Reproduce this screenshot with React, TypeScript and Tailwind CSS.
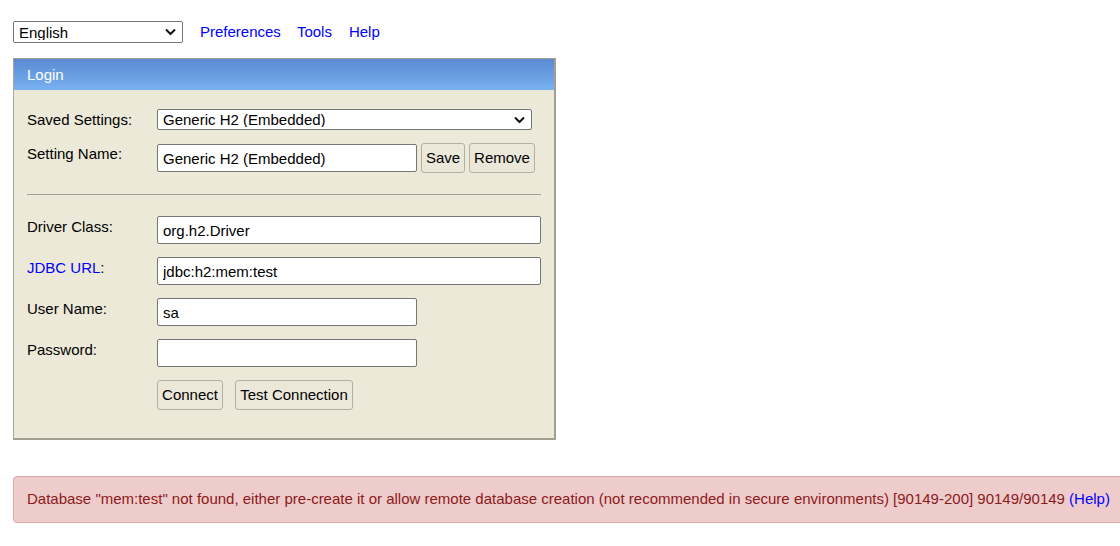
import React from "react";

const Chevron = () => (
  <svg width="11" height="7" viewBox="0 0 11 7" className="pointer-events-none absolute right-[7px] top-1/2 -translate-y-1/2">
    <path d="M1 1 L5.5 5.5 L10 1" fill="none" stroke="#111" strokeWidth="2" />
  </svg>
);

function Select({ value, className }: { value: string; className: string }) {
  return (
    <div className={`relative ${className}`}>
      <select
        defaultValue={value}
        className="appearance-none w-full h-full bg-white border border-[#767676] rounded-[2px] pl-[5px] pr-6 text-[15px] leading-none text-black outline-none"
      >
        <option>{value}</option>
      </select>
      <Chevron />
    </div>
  );
}

function Input({ value, w }: { value: string; w: string }) {
  return (
    <input
      defaultValue={value}
      className={`${w} h-[28px] bg-white border border-[#767676] rounded-[2px] px-[5px] text-[15px] text-black outline-none`}
    />
  );
}

function Btn({ children, w }: { children: React.ReactNode; w: string }) {
  return (
    <button className={`${w} h-[30px] bg-[#ebe8da] border border-[#b3b0a3] rounded-[3px] text-[15px] text-black px-0 whitespace-nowrap`}>
      {children}
    </button>
  );
}

export default function App() {
  return (
    <div
      className="w-screen min-h-screen overflow-hidden bg-white text-[15px] text-black"
      style={{ fontFamily: '"Liberation Sans", Arial, sans-serif' }}
    >
      <div className="flex items-center pl-[13px] pt-[21px] gap-[17px]">
        <Select value="English" className="w-[170px] h-[22px]" />
        <a className="text-[#0000ff] leading-[22px]">Preferences</a>
        <a className="text-[#0000ff] leading-[22px] -ml-px">Tools</a>
        <a className="text-[#0000ff] leading-[22px]">Help</a>
      </div>

      <div className="ml-[13px] mt-[15px] w-[543px] border-t border-l border-r-2 border-b-2 border-t-[#a3a193] border-l-[#a8a699] border-r-[#a19f92] border-b-[#a19f92] bg-[#ece9d8]">
        <div className="h-[31px] flex items-center pl-[13px] pt-[2px] text-white bg-gradient-to-b from-[#5a8ad2] to-[#78b1f1]">
          Login
        </div>
        <div className="pl-[13px] pr-[13px] pt-[19px] pb-[28px] flex flex-col">
          <div className="flex items-center h-[21px]">
            <div className="w-[130px] shrink-0 pt-[2px]">Saved Settings:</div>
            <Select value="Generic H2 (Embedded)" className="w-[375px] h-[21px]" />
          </div>
          <div className="flex items-start mt-[13px]">
            <div className="w-[130px] shrink-0 pt-[2px] leading-[17px]">Setting Name:</div>
            <div className="flex items-center gap-[4px]">
              <Input value="Generic H2 (Embedded)" w="w-[260px]" />
              <Btn w="w-[44px]">Save</Btn>
              <Btn w="w-[66px]">Remove</Btn>
            </div>
          </div>
          <div className="mt-[21px] h-px bg-[#a3a196] w-[514px]" />
          <div className="flex flex-col gap-[13px] mt-[21px]">
            <div className="flex items-start">
              <div className="w-[130px] shrink-0 pt-[2px] leading-[17px]">Driver Class:</div>
              <Input value="org.h2.Driver" w="w-[385px]" />
            </div>
            <div className="flex items-start">
              <div className="w-[130px] shrink-0 pt-[2px] leading-[17px]">
                <a className="text-[#0000ff]">JDBC URL</a>:
              </div>
              <Input value="jdbc:h2:mem:test" w="w-[385px]" />
            </div>
            <div className="flex items-start">
              <div className="w-[130px] shrink-0 pt-[2px] leading-[17px]">User Name:</div>
              <Input value="sa" w="w-[260px]" />
            </div>
            <div className="flex items-start">
              <div className="w-[130px] shrink-0 pt-[2px] leading-[17px]">Password:</div>
              <input type="password" className="w-[260px] h-[28px] bg-white border border-[#767676] rounded-[2px] px-[5px] outline-none" />
            </div>
            <div className="flex items-center gap-[12px] pl-[130px]">
              <Btn w="w-[66px]">Connect</Btn>
              <Btn w="w-[118px]">Test Connection</Btn>
            </div>
          </div>
        </div>
      </div>

      <div className="ml-[13px] mt-[36px] w-[1120px] h-[47px] flex items-center pl-[13px] bg-[#efcccc] border border-[#dba9aa] rounded-[4px] text-[#8b1a1a] whitespace-nowrap">
        Database "mem:test" not found, either pre-create it or allow remote database creation (not recommended in secure environments) [90149-200] 90149/90149&nbsp;
        <a className="text-[#0000ff]">(Help)</a>
      </div>
    </div>
  );
}
